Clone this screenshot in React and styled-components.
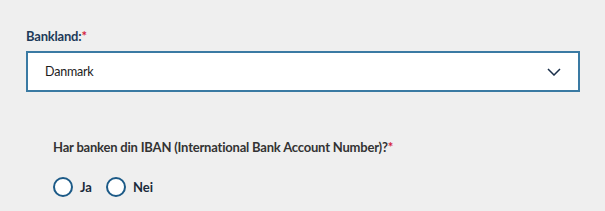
import React from "react";
import styled, { createGlobalStyle } from "styled-components";

const Global = createGlobalStyle`
  html, body { margin: 0; padding: 0; background: #efefef; }
  body { font-family: Lato, "Open Sans", sans-serif; }
`;

const Page = styled.div`
  width: 605px;
  height: 211px;
  box-sizing: border-box;
  padding: 28px 25px 0 26px;
  background: #efefef;
`;

const Label = styled.div`
  font-size: 13px;
  font-weight: 700;
  letter-spacing: -0.2px;
  color: #1d3a59;
  line-height: 16px;
  margin-bottom: 7px;
`;

const Star = styled.span`
  color: #d4213d;
`;

const Select = styled.div`
  display: flex;
  align-items: center;
  justify-content: space-between;
  height: 41px;
  box-sizing: border-box;
  border: 2px solid #3a7aa3;
  background: #fff;
  padding: 0 17px 0 17px;
  font-size: 12.5px;
  letter-spacing: -0.2px;
  color: #1b1b1b;
`;

const Section = styled.div`
  padding: 47px 0 0 27px;
`;

const Question = styled.div`
  font-size: 13px;
  font-weight: 700;
  letter-spacing: -0.2px;
  color: #333;
  line-height: 16px;
  margin-bottom: 22px;
`;

const Options = styled.div`
  display: flex;
  gap: 14px;
`;

const Option = styled.label`
  display: flex;
  align-items: center;
  gap: 7px;
  font-size: 13px;
  font-weight: 700;
  color: #1b2b3c;
`;

const Circle = styled.span`
  width: 20px;
  height: 20px;
  box-sizing: border-box;
  border: 2px solid #1c5a87;
  border-radius: 50%;
  background: #fff;
`;

export default function App() {
  return (
    <Page>
      <Global />
      <Label>
        Bankland:<Star>*</Star>
      </Label>
      <Select>
        <span>Danmark</span>
        <svg width="14" height="8" viewBox="0 0 14 8">
          <path d="M1 1 L7 7 L13 1" fill="none" stroke="#1a2f4a" strokeWidth="1.5" />
        </svg>
      </Select>
      <Section>
        <Question>
          Har banken din IBAN (International Bank Account Number)?<Star>*</Star>
        </Question>
        <Options>
          <Option>
            <Circle />
            Ja
          </Option>
          <Option>
            <Circle />
            Nei
          </Option>
        </Options>
      </Section>
    </Page>
  );
}
